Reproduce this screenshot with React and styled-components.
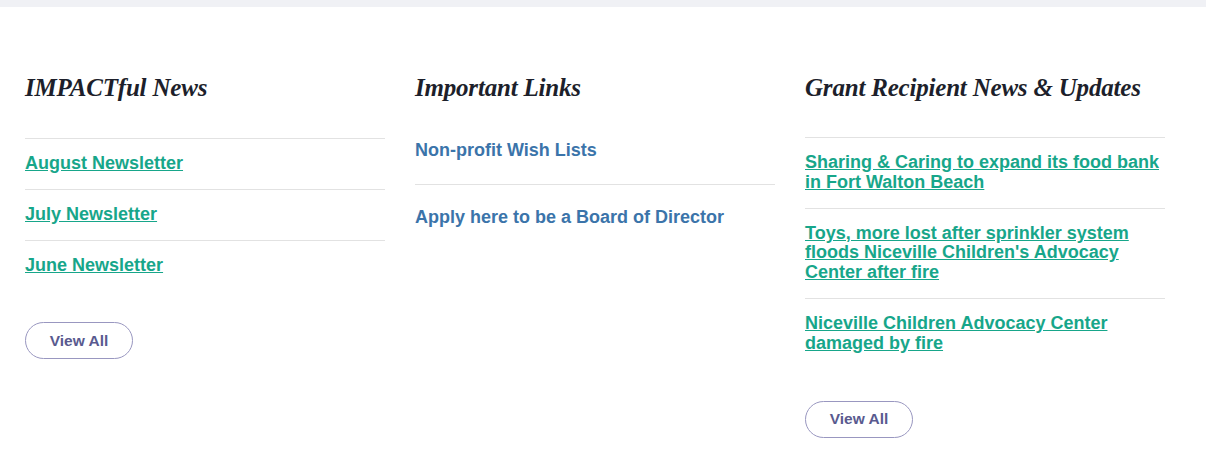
import React from "react";
import styled, { createGlobalStyle } from "styled-components";

const Global = createGlobalStyle`
  html, body {
    margin: 0;
    padding: 0;
    background: #ffffff;
  }
  body {
    font-family: "Liberation Sans", Arial, sans-serif;
  }
`;

const TopBar = styled.div`
  height: 7px;
  background: #f0f1f5;
`;

const Footer = styled.section`
  display: grid;
  grid-template-columns: repeat(3, 360px);
  column-gap: 30px;
  padding: 65px 25px 40px;
  align-items: start;
`;

const Column = styled.div`
  display: flex;
  flex-direction: column;
  align-items: flex-start;
`;

const Heading = styled.h3`
  margin: 0 0 ${(p) => p.$gap}px;
  font-family: "Liberation Serif", "Times New Roman", serif;
  font-style: italic;
  font-weight: 700;
  font-size: 25px;
  line-height: 32px;
  color: #1d1f2b;
  letter-spacing: -0.2px;
`;

const List = styled.ul`
  list-style: none;
  margin: 0;
  padding: 0;
  width: 100%;
`;

const Item = styled.li`
  border-top: 1px solid #e2e2e2;
  padding: ${(p) => p.$pad}px 0;
  &:first-child {
    border-top-color: ${(p) => (p.$firstLine ? "#e2e2e2" : "transparent")};
  }
`;

const NewsLink = styled.a`
  display: block;
  font-family: "Liberation Sans", Arial, sans-serif;
  font-weight: 700;
  font-size: 18px;
  line-height: 1.1;
  color: ${(p) => (p.$tone === "blue" ? "#3b74aa" : "#17a68a")};
  text-decoration: ${(p) => (p.$tone === "blue" ? "none" : "underline")};
  text-underline-offset: 1px;
  cursor: pointer;
`;

const ViewAll = styled.a`
  display: inline-flex;
  align-items: center;
  justify-content: center;
  margin-top: 32px;
  width: 108px;
  height: 37px;
  box-sizing: border-box;
  border: 1px solid #9997c0;
  border-radius: 19px;
  font-family: "Liberation Sans", Arial, sans-serif;
  font-weight: 700;
  font-size: 15.5px;
  color: #595a8f;
  text-decoration: none;
  cursor: pointer;
`;

const impactful = ["August Newsletter", "July Newsletter", "June Newsletter"];

const important = ["Non-profit Wish Lists", "Apply here to be a Board of Director"];

const grants = [
  "Sharing & Caring to expand its food bank in Fort Walton Beach",
  "Toys, more lost after sprinkler system floods Niceville Children's Advocacy Center after fire",
  "Niceville Children Advocacy Center damaged by fire",
];

export default function App() {
  return (
    <>
      <Global />
      <TopBar />
      <Footer>
        <Column>
          <Heading $gap={34}>IMPACTful News</Heading>
          <List>
            {impactful.map((t) => (
              <Item key={t} $pad={15} $firstLine>
                <NewsLink>{t}</NewsLink>
              </Item>
            ))}
          </List>
          <ViewAll>View All</ViewAll>
        </Column>

        <Column>
          <Heading $gap={13}>Important Links</Heading>
          <List>
            {important.map((t) => (
              <Item key={t} $pad={23}>
                <NewsLink $tone="blue">{t}</NewsLink>
              </Item>
            ))}
          </List>
        </Column>

        <Column>
          <Heading $gap={33}>Grant Recipient News &amp; Updates</Heading>
          <List>
            {grants.map((t) => (
              <Item key={t} $pad={15} $firstLine>
                <NewsLink>{t}</NewsLink>
              </Item>
            ))}
          </List>
          <ViewAll>View All</ViewAll>
        </Column>
      </Footer>
    </>
  );
}
